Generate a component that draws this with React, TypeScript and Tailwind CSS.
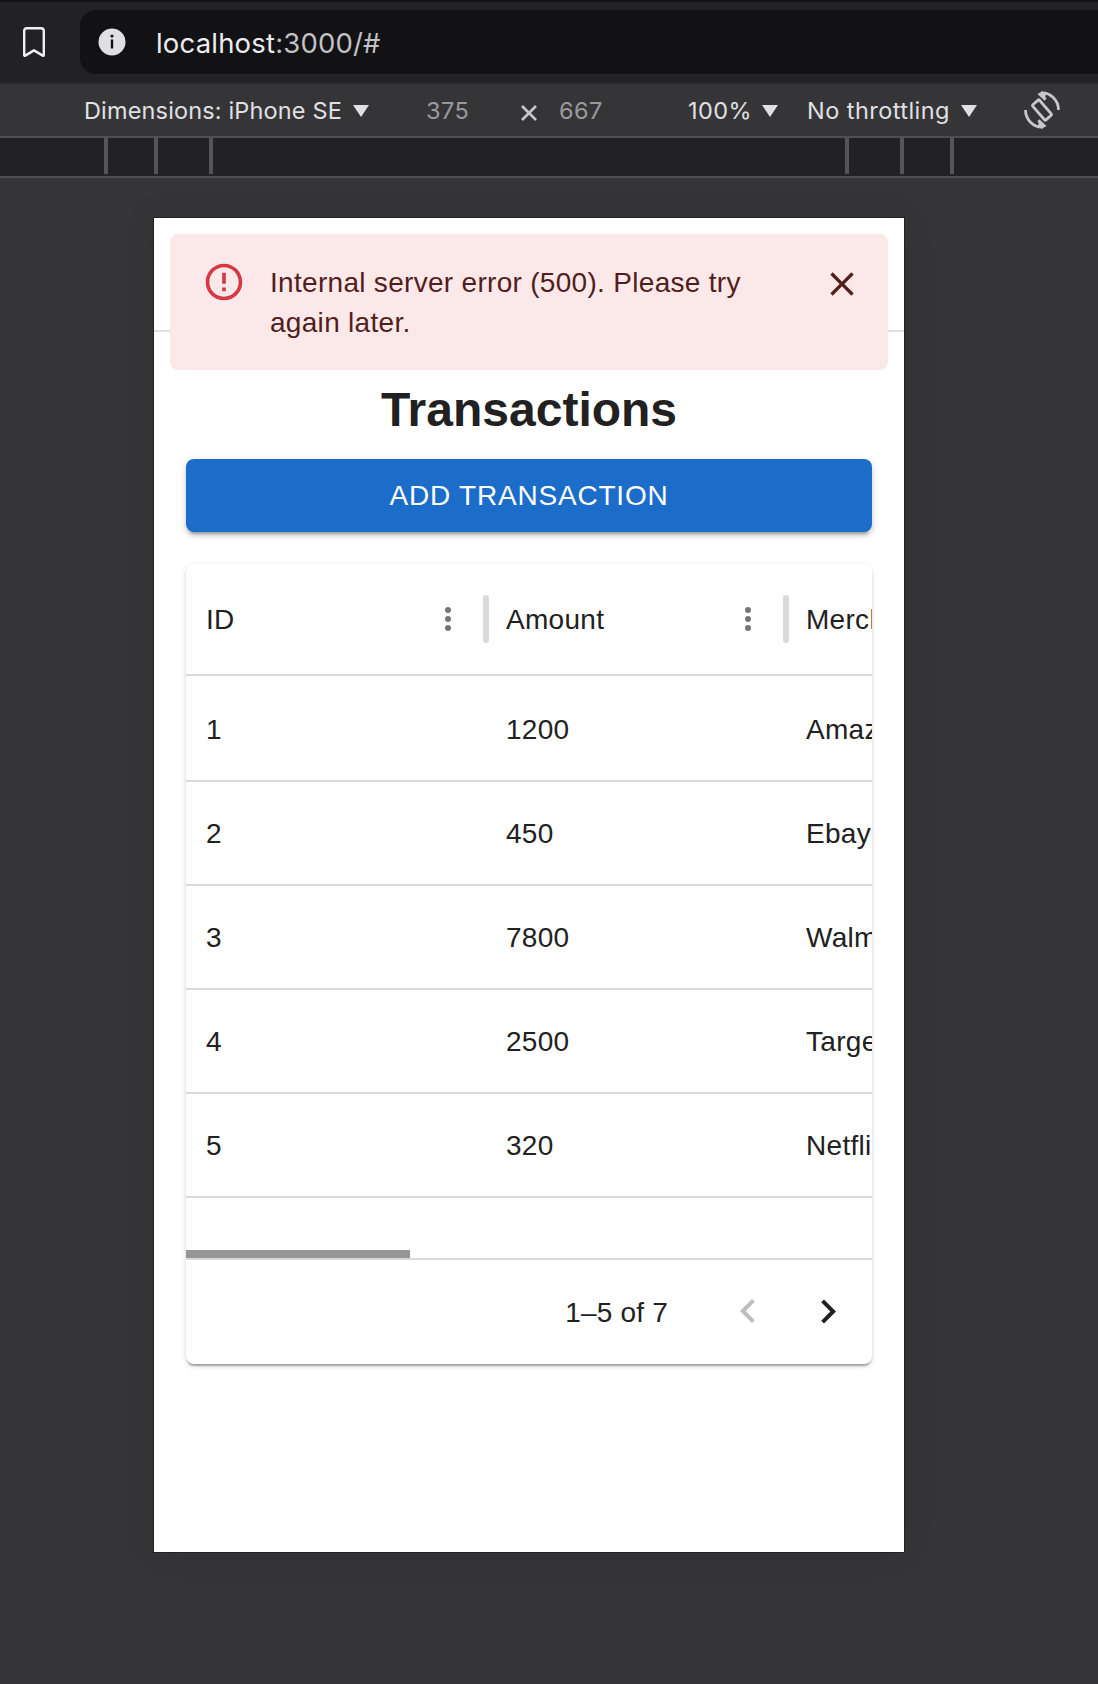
import React from "react";

const columns = ["ID", "Amount", "Merchant"];
const rows = [
  ["1", "1200", "Amazon"],
  ["2", "450", "Ebay"],
  ["3", "7800", "Walmart"],
  ["4", "2500", "Target"],
  ["5", "320", "Netflix"],
];

function Caret() {
  return (
    <svg width="16" height="12" viewBox="0 0 16 12" className="shrink-0">
      <path d="M0 0h16L8 12z" fill="#e0e0e4" />
    </svg>
  );
}

function Tick({ className }: { className: string }) {
  return <span className={`block h-9 w-1 shrink-0 bg-[#555558] ${className}`} />;
}

function AddressBar() {
  return (
    <header className="flex h-[82px] items-start border-t-2 border-[#131315] bg-[#222224]">
      <svg width="24" height="32" viewBox="0 0 24 32" className="ml-[22px] mt-6" fill="none">
        <path d="M2.200 5a2.800 2.800 0 0 1 2.800-2.800h14a2.800 2.800 0 0 1 2.800 2.800v24q0 1.200-1 .6L12 24.400l-8.800 5.200q-1 .6-1-.6z" stroke="#f0f0f3" strokeWidth="2.400" strokeLinejoin="round" />
      </svg>
      <div className="ml-[34px] mt-2 flex h-16 flex-1 items-center rounded-l-2xl bg-[#121214] pl-[18px]">
        <svg width="28" height="28" viewBox="0 0 28 28">
          <circle cx="14" cy="14" r="13.500" fill="#e0dfe5" />
          <circle cx="14" cy="8" r="1.600" fill="#121214" />
          <path d="M14 11.500V20.500" stroke="#121214" strokeWidth="2.400" fill="none" />
        </svg>
        <p className="ml-[30px] pt-0.5 font-['Inter'] text-[27.5px] leading-8 tracking-[0.18px] text-[#c2c2c4]">
          <span className="text-[#ececee]">localhost</span>:3000/#
        </p>
      </div>
    </header>
  );
}

function DeviceToolbar() {
  return (
    <div className="flex h-14 items-center border-b-2 border-t-2 border-b-[#505053] border-t-[#29292b] bg-[#353537] pt-0.5 font-['Inter'] text-[23.5px] leading-8 text-[#e0e0e4]">
      <div className="ml-[84px] flex w-[342px] items-center gap-[11px]">
        <span className="tracking-[0.15px]">Dimensions: iPhone SE</span>
        <Caret />
      </div>
      <span className="w-[94px] tracking-[0.4px] text-[#9a9a9d]">375</span>
      <svg width="18" height="18" viewBox="0 0 18 18" className="mt-1">
        <path d="M2 2l14 14M16 2L2 16" stroke="#c8c8cb" strokeWidth="2.600" />
      </svg>
      <span className="ml-[21px] w-[129px] tracking-[0.4px] text-[#9a9a9d]">667</span>
      <div className="flex w-[119px] items-center gap-[10px]">
        <span className="tracking-[0.4px]">100%</span>
        <Caret />
      </div>
      <div className="flex w-[217px] items-center gap-[11px]">
        <span className="whitespace-nowrap tracking-[0.45px]">No throttling</span>
        <Caret />
      </div>
      <svg width="36" height="38" viewBox="0 0 36 38" fill="none" stroke="#c8c8cb" strokeWidth="2.800" className="-mt-0.5">
        <rect x="13.500" y="9" width="9" height="20" rx="1" transform="rotate(-41 18 19)" />
        <path d="M34.500 19A16.500 17.300 0 0 0 17 1.900M1.500 19A16.500 17.300 0 0 0 19 36.100" />
        <path d="M13.500 2.900L18 .5l5 1.800-1.800 3 1.300 2.500-1.900 1.900zM22.500 35.100L18 37.500l-5-1.800 1.800-3-1.300-2.500 1.900-1.900z" fill="#c8c8cb" stroke="none" />
      </svg>
    </div>
  );
}

function Ruler() {
  return (
    <div className="flex h-10 items-start border-b-2 border-[#505053] bg-[#222126]">
      <Tick className="ml-[104px]" />
      <Tick className="ml-[46px]" />
      <Tick className="ml-[51px]" />
      <Tick className="ml-[632px]" />
      <Tick className="ml-[51px]" />
      <Tick className="ml-[46px]" />
    </div>
  );
}

function ErrorAlert() {
  return (
    <div role="alert" className="absolute left-4 top-4 flex h-[136px] w-[718px] items-start rounded-lg bg-[#fbe9e9] text-[#541d1d]">
      <svg width="44" height="44" viewBox="0 0 24 24" className="ml-8 mt-[26px]" fill="#d43a41">
        <path d="M11 15h2v2h-2zm0-8h2v6h-2zm.99-5C6.470 2 2 6.480 2 12s4.470 10 9.990 10C17.520 22 22 17.520 22 12S17.520 2 11.990 2zM12 20c-4.420 0-8-3.580-8-8s3.580-8 8-8 8 3.580 8 8-3.580 8-8 8z" />
      </svg>
      <p className="ml-6 mt-[29px] w-[520px] text-[28px] leading-10 tracking-[0.3px]">
        Internal server error (500). Please try
        <br />
        again later.
      </p>
      <button aria-label="Close" className="ml-8 mt-[30px]">
        <svg width="40" height="40" viewBox="0 0 24 24" fill="currentColor">
          <path d="M19 6.410L17.590 5 12 10.590 6.410 5 5 6.410 10.590 12 5 17.590 6.410 19 12 13.410 17.590 19 19 17.590 13.410 12z" />
        </svg>
      </button>
    </div>
  );
}

function DataGrid() {
  return (
    <section className="mt-8 h-[800px] overflow-hidden rounded-lg bg-white text-[28px] leading-10 tracking-[0.3px] shadow-[0_4px_2px_-2px_rgba(0,0,0,0.2),0_2px_2px_0_rgba(0,0,0,0.14),0_2px_6px_0_rgba(0,0,0,0.12)]">
      <div className="flex h-28 w-[900px] items-center border-b-2 border-[#dadada]">
        {columns.map((name) => (
          <div key={name} className="flex w-[300px] items-center pl-5">
            <span className="flex-1 pt-0.5">{name}</span>
            <svg width="6" height="24" viewBox="0 0 6 24" fill="#757575">
              <circle cx="3" cy="3" r="3" />
              <circle cx="3" cy="12" r="3" />
              <circle cx="3" cy="21" r="3" />
            </svg>
            <span className="-mr-[3px] ml-8 h-12 w-1.5 rounded-full bg-[#dadada]" />
          </div>
        ))}
      </div>
      {rows.map((row) => (
        <div key={row[0]} className="flex h-[104px] w-[900px] items-center border-b-2 border-[#dadada] pt-0.5 nth-2:h-[106px] nth-2:pt-1">
          {row.map((cell, i) => (
            <span key={i} className="w-[300px] pl-5">{cell}</span>
          ))}
        </div>
      ))}
      <div className="flex h-[62px] items-end border-b-2 border-[#dadada]">
        <span className="h-2 w-56 bg-[#969696]" />
      </div>
      <div className="flex h-[104px] items-center justify-end pr-5">
        <span className="pt-0.5 tracking-[0.2px]">1–5 of 7</span>
        <svg width="48" height="48" viewBox="0 0 24 24" className="ml-14" fill="#bdbdbd">
          <path d="M15.410 16.090l-4.580-4.590 4.580-4.590L14 5.500l-6 6 6 6z" />
        </svg>
        <svg width="48" height="48" viewBox="0 0 24 24" className="ml-8" fill="#212121">
          <path d="M8.590 16.340l4.580-4.590-4.580-4.590L10 5.750l6 6-6 6z" />
        </svg>
      </div>
    </section>
  );
}

export default function App() {
  return (
    <div className="h-[1684px] w-[1098px] overflow-hidden bg-[#353537] font-['Liberation_Sans',Arial,sans-serif]">
      <AddressBar />
      <DeviceToolbar />
      <Ruler />
      <main className="relative ml-[154px] mt-10 h-[1334px] w-[750px] bg-white text-[#212121] shadow-[0_0_0_1px_#222224,0_0_40px_rgba(0,0,0,0.06)]">
        <div className="h-[114px] border-b-2 border-[#e0e0e0]" />
        <ErrorAlert />
        <div className="px-8">
          <h1 className="pt-[50px] text-center text-[48px] font-bold leading-[56px]">Transactions</h1>
          <button className="mt-[21px] flex h-[73px] w-full items-center justify-center rounded-lg bg-[#1c6dc9] text-[28px] tracking-[0.8px] text-white shadow-[0_6px_2px_-4px_rgba(0,0,0,0.2),0_4px_4px_0_rgba(0,0,0,0.14),0_2px_10px_0_rgba(0,0,0,0.12)]">
            ADD TRANSACTION
          </button>
          <DataGrid />
        </div>
      </main>
    </div>
  );
}
